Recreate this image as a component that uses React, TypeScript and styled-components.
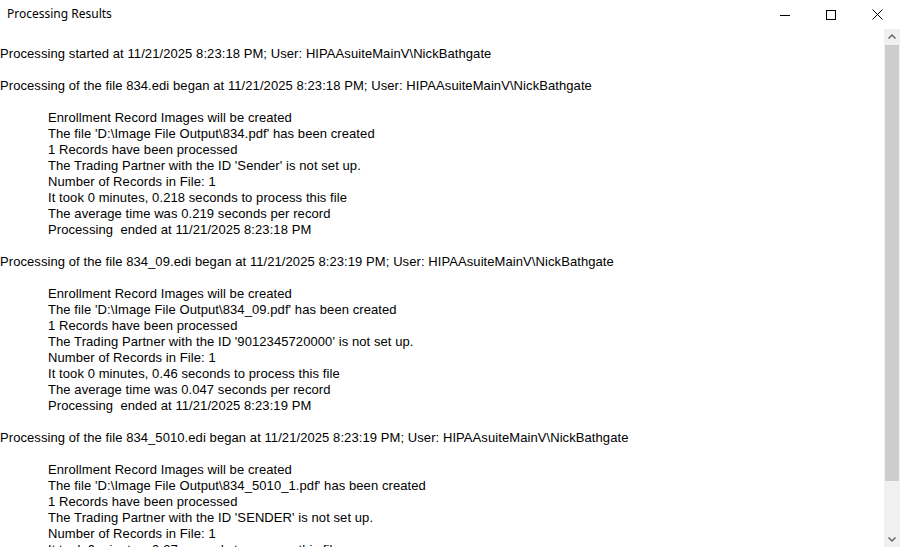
import React from "react";
import styled, { createGlobalStyle } from "styled-components";

const Global = createGlobalStyle`
  html, body { margin: 0; padding: 0; background: #fff; overflow: hidden; }
  body { font-family: "Liberation Sans", Arial, sans-serif; }
`;

const Window = styled.div`
  width: 900px;
  height: 547px;
  display: flex;
  flex-direction: column;
  background: #fff;
  overflow: hidden;
`;

const TitleBar = styled.div`
  height: 29px;
  flex: none;
  display: flex;
  align-items: center;
  justify-content: space-between;
`;

const Title = styled.div`
  font-family: "Segoe UI", "Noto Sans", "Liberation Sans", sans-serif;
  font-size: 12px;
  color: #000;
  padding-left: 7px;
  padding-bottom: 2px;
`;

const Controls = styled.div`
  display: flex;
  height: 100%;
`;

const CtrlButton = styled.div`
  width: 46px;
  height: 29px;
  display: flex;
  align-items: center;
  justify-content: center;
`;

const Body = styled.div`
  flex: 1;
  display: flex;
  min-height: 0;
`;

const Content = styled.div`
  flex: 1;
  overflow: hidden;
  padding-top: 17px;
  font-family: "Liberation Sans", Arial, sans-serif;
  font-size: 13px;
  letter-spacing: 0.08px;
  line-height: 16px;
  color: #000;
`;

const Line = styled.div<{ $indent?: boolean }>`
  white-space: pre;
  height: 16px;
  padding-left: ${(p) => (p.$indent ? "48px" : "0")};
`;

const Scrollbar = styled.div`
  width: 16px;
  flex: none;
  display: flex;
  flex-direction: column;
  background: #f0f0f0;
`;

const Arrow = styled.div`
  height: 16px;
  flex: none;
  display: flex;
  align-items: center;
  justify-content: center;
  background: #f0f0f0;
`;

const Thumb = styled.div`
  height: 436px;
  flex: none;
  background: #cdcdcd;
  margin: 0 1px 0 1px;
`;

const Track = styled.div`
  flex: 1;
`;

type Block = { head: string; lines: string[] };

const blocks: Block[] = [
  {
    head: "Processing of the file 834.edi began at 11/21/2025 8:23:18 PM; User: HIPAAsuiteMainV\\NickBathgate",
    lines: [
      "Enrollment Record Images will be created",
      "The file 'D:\\Image File Output\\834.pdf' has been created",
      "1 Records have been processed",
      "The Trading Partner with the ID 'Sender' is not set up.",
      "Number of Records in File: 1",
      "It took 0 minutes, 0.218 seconds to process this file",
      "The average time was 0.219 seconds per record",
      "Processing  ended at 11/21/2025 8:23:18 PM",
    ],
  },
  {
    head: "Processing of the file 834_09.edi began at 11/21/2025 8:23:19 PM; User: HIPAAsuiteMainV\\NickBathgate",
    lines: [
      "Enrollment Record Images will be created",
      "The file 'D:\\Image File Output\\834_09.pdf' has been created",
      "1 Records have been processed",
      "The Trading Partner with the ID '9012345720000' is not set up.",
      "Number of Records in File: 1",
      "It took 0 minutes, 0.46 seconds to process this file",
      "The average time was 0.047 seconds per record",
      "Processing  ended at 11/21/2025 8:23:19 PM",
    ],
  },
  {
    head: "Processing of the file 834_5010.edi began at 11/21/2025 8:23:19 PM; User: HIPAAsuiteMainV\\NickBathgate",
    lines: [
      "Enrollment Record Images will be created",
      "The file 'D:\\Image File Output\\834_5010_1.pdf' has been created",
      "1 Records have been processed",
      "The Trading Partner with the ID 'SENDER' is not set up.",
      "Number of Records in File: 1",
      "It took 0 minutes, 0.27 seconds to process this file",
      "The average time was 0.027 seconds per record",
      "Processing  ended at 11/21/2025 8:23:19 PM",
    ],
  },
];

export default function App() {
  return (
    <>
      <Global />
      <Window>
        <TitleBar>
          <Title>Processing Results</Title>
          <Controls>
            <CtrlButton>
              <svg width="10" height="10" viewBox="0 0 10 10">
                <line x1="0" y1="5.5" x2="10" y2="5.5" stroke="#000" strokeWidth="1" />
              </svg>
            </CtrlButton>
            <CtrlButton>
              <svg width="10" height="10" viewBox="0 0 10 10">
                <rect x="0.5" y="0.5" width="9" height="9" fill="none" stroke="#000" strokeWidth="1" />
              </svg>
            </CtrlButton>
            <CtrlButton>
              <svg width="11" height="11" viewBox="0 0 11 11">
                <path d="M0.5 0.5 L10.5 10.5 M10.5 0.5 L0.5 10.5" stroke="#000" strokeWidth="1" />
              </svg>
            </CtrlButton>
          </Controls>
        </TitleBar>
        <Body>
          <Content>
            <Line>Processing started at 11/21/2025 8:23:18 PM; User: HIPAAsuiteMainV\NickBathgate</Line>
            <Line />
            {blocks.map((b, i) => (
              <React.Fragment key={i}>
                <Line>{b.head}</Line>
                <Line />
                {b.lines.map((l, j) => (
                  <Line key={j} $indent>
                    {l}
                  </Line>
                ))}
                <Line />
              </React.Fragment>
            ))}
          </Content>
          <Scrollbar>
            <Arrow>
              <svg width="8" height="6" viewBox="0 0 8 6">
                <path d="M0.5 4.5 L4 1 L7.5 4.5" fill="none" stroke="#606060" strokeWidth="1.4" />
              </svg>
            </Arrow>
            <Thumb />
            <Track />
            <Arrow>
              <svg width="8" height="6" viewBox="0 0 8 6">
                <path d="M0.5 1.5 L4 5 L7.5 1.5" fill="none" stroke="#606060" strokeWidth="1.4" />
              </svg>
            </Arrow>
          </Scrollbar>
        </Body>
      </Window>
    </>
  );
}
